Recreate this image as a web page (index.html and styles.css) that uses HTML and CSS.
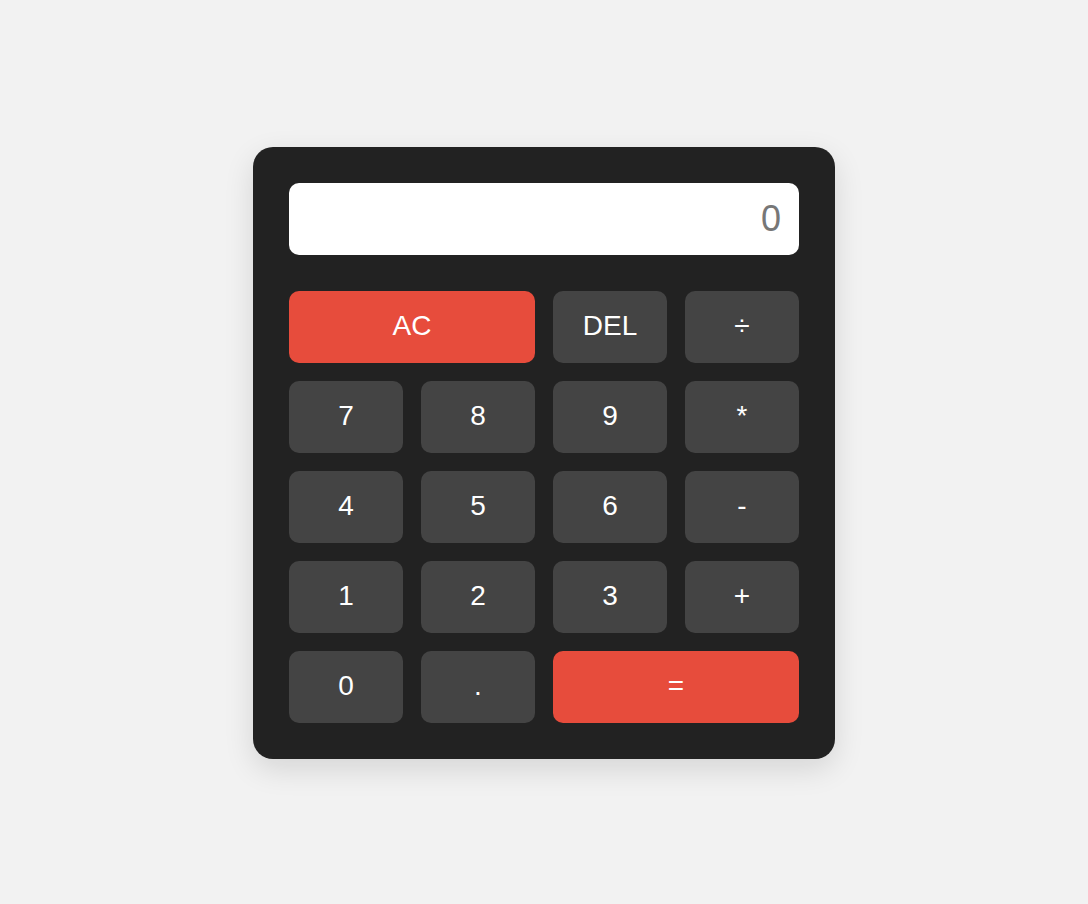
FILE: index.html
```html
<!DOCTYPE html>
<html lang="en">
<head>
<meta charset="utf-8">
<title>Calculator</title>
<link rel="stylesheet" href="styles.css">
</head>
<body>
<div class="calculator">
  <div class="display">0</div>
  <div class="keys">
    <button class="key accent wide">AC</button>
    <button class="key">DEL</button>
    <button class="key">÷</button>
    <button class="key">7</button>
    <button class="key">8</button>
    <button class="key">9</button>
    <button class="key">*</button>
    <button class="key">4</button>
    <button class="key">5</button>
    <button class="key">6</button>
    <button class="key">-</button>
    <button class="key">1</button>
    <button class="key">2</button>
    <button class="key">3</button>
    <button class="key">+</button>
    <button class="key">0</button>
    <button class="key">.</button>
    <button class="key accent wide">=</button>
  </div>
</div>
</body>
</html>
```
FILE: styles.css
```css
html, body {
  margin: 0;
  padding: 0;
}
body {
  background: #f2f2f2;
  font-family: "Liberation Sans", Arial, sans-serif;
  box-sizing: border-box;
  min-height: 100vh;
  padding-top: 2px;
  display: flex;
  align-items: center;
  justify-content: center;
}
.calculator {
  background: #222222;
  border-radius: 20px;
  padding: 36px;
  width: 510px;
  box-shadow: 0 10px 30px rgba(0, 0, 0, 0.12);
}
.display {
  background: #ffffff;
  border-radius: 10px;
  height: 72px;
  box-sizing: border-box;
  padding: 0 18px;
  display: flex;
  align-items: center;
  justify-content: flex-end;
  font-size: 36px;
  color: #777777;
  margin-bottom: 36px;
}
.keys {
  display: grid;
  grid-template-columns: repeat(4, 114px);
  grid-auto-rows: 72px;
  gap: 18px;
}
.key {
  border: none;
  border-radius: 10px;
  background: #444444;
  color: #ffffff;
  font-family: "Liberation Sans", Arial, sans-serif;
  font-size: 28px;
  padding: 0 0 2px;
  cursor: pointer;
}
.key.wide {
  grid-column: span 2;
}
.key.accent {
  background: #e74c3c;
}
```
